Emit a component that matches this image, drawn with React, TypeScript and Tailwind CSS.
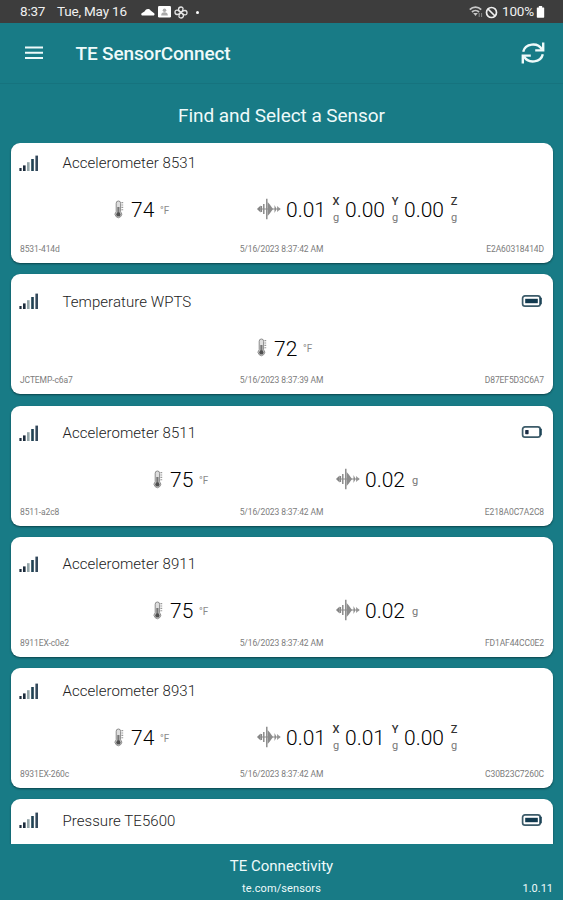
interface AxisValue {
  value: string;
  axis?: string;
}

interface Sensor {
  name: string;
  id?: string;
  address?: string;
  time?: string;
  temperature?: string;
  vibration?: AxisValue[];
  battery?: "full" | "low";
  /** Vertical offset of the title and readings inside the card. */
  offset: string;
}

const SENSORS: Sensor[] = [
  {
    name: "Accelerometer 8531",
    id: "8531-414d",
    address: "E2A60318414D",
    time: "5/16/2023 8:37:42 AM",
    temperature: "74",
    vibration: [
      { value: "0.01", axis: "X" },
      { value: "0.00", axis: "Y" },
      { value: "0.00", axis: "Z" },
    ],
    offset: "pt-2",
  },
  {
    name: "Temperature WPTS",
    id: "JCTEMP-c6a7",
    address: "D87EF5D3C6A7",
    time: "5/16/2023 8:37:39 AM",
    temperature: "72",
    battery: "full",
    offset: "pt-[15.5px]",
  },
  {
    name: "Accelerometer 8511",
    id: "8511-a2c8",
    address: "E218A0C7A2C8",
    time: "5/16/2023 8:37:42 AM",
    temperature: "75",
    vibration: [{ value: "0.02" }],
    battery: "low",
    offset: "pt-[15.5px]",
  },
  {
    name: "Accelerometer 8911",
    id: "8911EX-c0e2",
    address: "FD1AF44CC0E2",
    time: "5/16/2023 8:37:42 AM",
    temperature: "75",
    vibration: [{ value: "0.02" }],
    offset: "pt-[15.5px]",
  },
  {
    name: "Accelerometer 8931",
    id: "8931EX-260c",
    address: "C30B23C7260C",
    time: "5/16/2023 8:37:42 AM",
    temperature: "74",
    vibration: [
      { value: "0.01", axis: "X" },
      { value: "0.01", axis: "Y" },
      { value: "0.00", axis: "Z" },
    ],
    offset: "pt-[11px]",
  },
  {
    name: "Pressure TE5600",
    battery: "full",
    offset: "pt-[9.5px]",
  },
];

function SignalIcon() {
  return (
    <svg width="20" height="17" viewBox="0 0 20 17" className="shrink-0">
      <rect x="0.4" y="13" width="2.2" height="3" fill="#1d2c3c" />
      <rect x="4" y="10.4" width="2.6" height="5.6" fill="#1d2c3c" />
      <rect x="8" y="7.2" width="2.6" height="8.8" fill="#93a5a8" />
      <rect x="12.2" y="4" width="2.6" height="12" fill="#1f4153" />
      <rect x="16.4" y="0.6" width="2.6" height="15.4" fill="#34495c" />
    </svg>
  );
}

function BatteryIcon({ level }: { level: "full" | "low" }) {
  return (
    <svg width="22" height="14" viewBox="0 0 22 14" className="-mt-0.5 shrink-0">
      <rect x="1.6" y="1.8" width="17.6" height="10.4" rx="2.4" fill="#fff" stroke="#3c5b69" strokeWidth="1.7" />
      <rect x="18.6" y="3.4" width="2.2" height="7.2" rx="0.8" fill="#1d4457" />
      {level === "full" ? (
        <rect x="4.2" y="4.8" width="12.6" height="4.4" fill="#123a4f" />
      ) : (
        <rect x="4.2" y="5" width="3.4" height="4.2" rx="0.6" fill="#1b2c44" />
      )}
    </svg>
  );
}

function ThermometerIcon() {
  return (
    <svg width="10" height="19" viewBox="0 0 10 19" fill="none" className="-mt-0.5 shrink-0">
      <path
        d="M2.2 11.8V3.2a2.2 2.2 0 0 1 4.4 0v8.6a3.3 3.3 0 1 1-4.4 0Z"
        fill="#dedede"
        stroke="#8c8c8c"
        strokeWidth="1"
      />
      <path d="M4.4 7v7" stroke="#777" strokeWidth="2.2" />
      <circle cx="4.4" cy="14.4" r="2.2" fill="#505050" />
      <path d="M7.4 2.6h1.8M7.4 5h1.8M7.4 7.4h1.8M7.4 9.8h1.8" stroke="#999" strokeWidth="1.1" />
    </svg>
  );
}

function VibrationIcon() {
  return (
    <svg width="24" height="22" viewBox="0 0 24 22" className="-mt-[3px] shrink-0">
      <path d="M0 11l3.6-3.4v6.8Z" fill="#808080" />
      <path d="M4.4 8v6M6.8 6v10M9.8 0.8v20.4" stroke="#858585" strokeWidth="1.4" />
      <path d="M10.6 4v14l2.2-2.5 3.2-4.5-3.2-4.5Z" fill="#8c8c8c" />
      <path d="M17.5 7l1.6 3v2l-1.6 3Z" fill="#8a8a8a" />
      <path d="M20 8l3.8 3-3.8 3Z" fill="#a0a0a0" />
      <path d="M1 11h22" stroke="#8c8c8c" strokeWidth="1" />
    </svg>
  );
}

function MenuIcon() {
  return (
    <svg width="18" height="14" viewBox="0 0 18 14" stroke="#eefafa" strokeWidth="2">
      <path d="M0 1.5h18M0 6.8h18M0 12.1h18" />
    </svg>
  );
}

function RefreshIcon() {
  return (
    <svg width="24" height="24" viewBox="0 0 24 24" fill="none" stroke="#eefafa" strokeWidth="2.4">
      <path d="M2.2 10.8a10 9 0 0 1 18.8-2.2" />
      <path d="M22.2 1.6v7.8h-8" />
      <path d="M21.8 13.2a10 9 0 0 1-18.8 2.2" />
      <path d="M1.8 22.4v-7.8h8" />
    </svg>
  );
}

function StatusBar() {
  return (
    <div className="h-[23px] shrink-0 bg-[#3d3d3d] text-[#f0f0f0] flex items-center justify-between pl-5 pr-[18px] text-[13.5px] leading-none tracking-[-0.2px]">
      <div className="flex items-center pt-px">
        <span className="w-[37px]">8:37</span>
        <span className="w-[84px] whitespace-nowrap">Tue, May 16</span>
        <svg width="14" height="8" viewBox="0 0 14 8" fill="#fff">
          <path d="M1 7.6a1.5 1.5 0 0 1 0-2.6l2.5-1.5C5 .5 8 .3 9.600 2.5L12.800 5a1.5 1.5 0 0 1 0 2.6Z" />
        </svg>
        <svg width="13" height="12" viewBox="0 0 13 12" className="ml-[3px]">
          <rect width="13" height="11.5" rx="1.2" fill="#fff" />
          <circle cx="6.5" cy="4.2" r="1.8" fill="#aaa" />
          <path d="M3.2 9.5a3.3 3.3 0 0 1 6.6 0Z" fill="#aaa" />
        </svg>
        <svg width="14" height="13" viewBox="0 0 14 13" fill="none" stroke="#e6e6e6" strokeWidth="1.3" className="ml-[3px]">
          <path d="M7 6.5C3.5 5 4 1 7 1s2.5 3.5 0 5.5Z" />
          <path d="M7 6.5C9.5 3.5 13.2 4 13 7s-4 2-6-.5Z" />
          <path d="M7 6.5c3.5 1.5 3 5.5 0 5.5s-2.5-3.5 0-5.5Z" />
          <path d="M7 6.5C4.5 9.5.8 9 1 6s4-2 6 .5Z" />
        </svg>
        <span className="ml-[8px] size-[3px] rounded-full bg-white" />
      </div>
      <div className="flex items-center pt-px">
        <svg width="14" height="12" viewBox="0 0 14 12" fill="none" stroke="#c8c8c8" strokeWidth="1.8">
          <path d="M.8 3.6a8 8 0 0 1 11.4 0M3 6a5 5 0 0 1 7 0" />
          <path d="M4.2 7L6.5 10l2.3-3Z" fill="#c8c8c8" stroke="none" />
          <path d="M10.2 7v4M12.6 7v4" stroke="#888" strokeWidth="1" />
        </svg>
        <svg width="13" height="13" viewBox="0 0 13 13" fill="none" stroke="#f0f0f0" strokeWidth="1.7" className="ml-[2px]">
          <circle cx="6.5" cy="6.5" r="5" />
          <path d="M3 3l7 7" />
        </svg>
        <span className="ml-1 w-[34px] whitespace-nowrap">100%</span>
        <svg width="9" height="12" viewBox="0 0 9 13" fill="#fff">
          <path d="M2.7 0h3.6v1.5H8A.8.8 0 0 1 8.5 2.3V12a.8.8 0 0 1-.8.8H1.3A.8.8 0 0 1 .5 12V2.3a.8.8 0 0 1 .8-.8h1.4Z" />
        </svg>
      </div>
    </div>
  );
}

function Temperature({ value }: { value: string }) {
  return (
    <div className="flex w-[58px] items-center">
      <ThermometerIcon />
      <span className="ml-[7px] w-[29px] text-[21px] leading-6 font-light text-black">{value}</span>
      <span className="pt-px text-[10px] leading-3 text-[#8a8a8a]">°F</span>
    </div>
  );
}

function Vibration({ values }: { values: AxisValue[] }) {
  return (
    <div className="flex items-center">
      <VibrationIcon />
      <div className="ml-[5px] flex">
        {values.map(({ value, axis }, i) => (
          <div key={i} className="flex w-[59px] items-center">
            <span className="w-[46px] text-[21px] leading-6 font-light text-black">{value}</span>
            <div className="flex w-2 flex-col items-center text-[11px] leading-3">
              {axis && <span className="mb-1 font-medium text-[#333]">{axis}</span>}
              <span className={axis ? "text-[#777]" : "pt-0.5 text-[#777]"}>g</span>
            </div>
          </div>
        ))}
      </div>
    </div>
  );
}

function SensorCard({ sensor }: { sensor: Sensor }) {
  const { vibration, temperature, battery } = sensor;
  const indent = !vibration
    ? "pl-[246px]"
    : vibration.length > 1
      ? "pl-[103px] gap-[85px]"
      : "pl-[142px] gap-[125px]";

  return (
    <div className="flex h-[120px] shrink-0 flex-col rounded-[9px] bg-white shadow-[0_1px_2px_rgba(0,30,35,0.6)]">
      <div className={`flex flex-1 flex-col ${sensor.offset}`}>
        <div className="flex h-6 items-center pl-2 pr-2.5">
          <SignalIcon />
          <span className="ml-[23.5px] flex-1 text-[15px] font-light tracking-[0.05px] text-[#222]">{sensor.name}</span>
          {battery && <BatteryIcon level={battery} />}
        </div>
        <div className={`mt-[19px] flex h-8 items-center ${indent}`}>
          {temperature && <Temperature value={temperature} />}
          {vibration && <Vibration values={vibration} />}
        </div>
      </div>
      {sensor.id && (
        <div className="grid grid-cols-3 px-[9px] pb-[9px] text-[8.5px] leading-[10px] tracking-[-0.1px] text-[#7c7c7c]">
          <span>{sensor.id}</span>
          <span className="-ml-px text-center whitespace-nowrap">{sensor.time}</span>
          <span className="text-right">{sensor.address}</span>
        </div>
      )}
    </div>
  );
}

export default function App() {
  return (
    <div className="flex h-[900px] w-[563px] flex-col overflow-hidden bg-[#187b86] font-['Roboto',sans-serif]">
      <StatusBar />
      <header className="flex h-[61px] shrink-0 items-center border-b border-[#16737e] pl-[25px] pr-[18px] text-[#eefafa]">
        <MenuIcon />
        <h1 className="ml-[32.5px] flex-1 pt-0.5 text-[19px] font-medium tracking-[-0.15px]">TE SensorConnect</h1>
        <RefreshIcon />
      </header>
      <h2 className="h-[59px] shrink-0 pt-[18px] text-center text-[19px] leading-7 tracking-[-0.05px] text-[#eefafa]">
        Find and Select a Sensor
      </h2>
      <main className="flex h-[701px] shrink-0 flex-col gap-[11.25px] overflow-hidden pl-[11px] pr-2.5">
        {SENSORS.map((sensor) => (
          <SensorCard key={sensor.name} sensor={sensor} />
        ))}
      </main>
      <footer className="relative flex-1 pt-3 text-center text-[#eefafa]">
        <div className="text-[15px] leading-5">TE Connectivity</div>
        <div className="mt-1.5 text-[11px] leading-[14px] tracking-[0.1px]">te.com/sensors</div>
        <span className="absolute right-2.5 bottom-1 text-[11px] leading-[14px]">1.0.11</span>
      </footer>
    </div>
  );
}
